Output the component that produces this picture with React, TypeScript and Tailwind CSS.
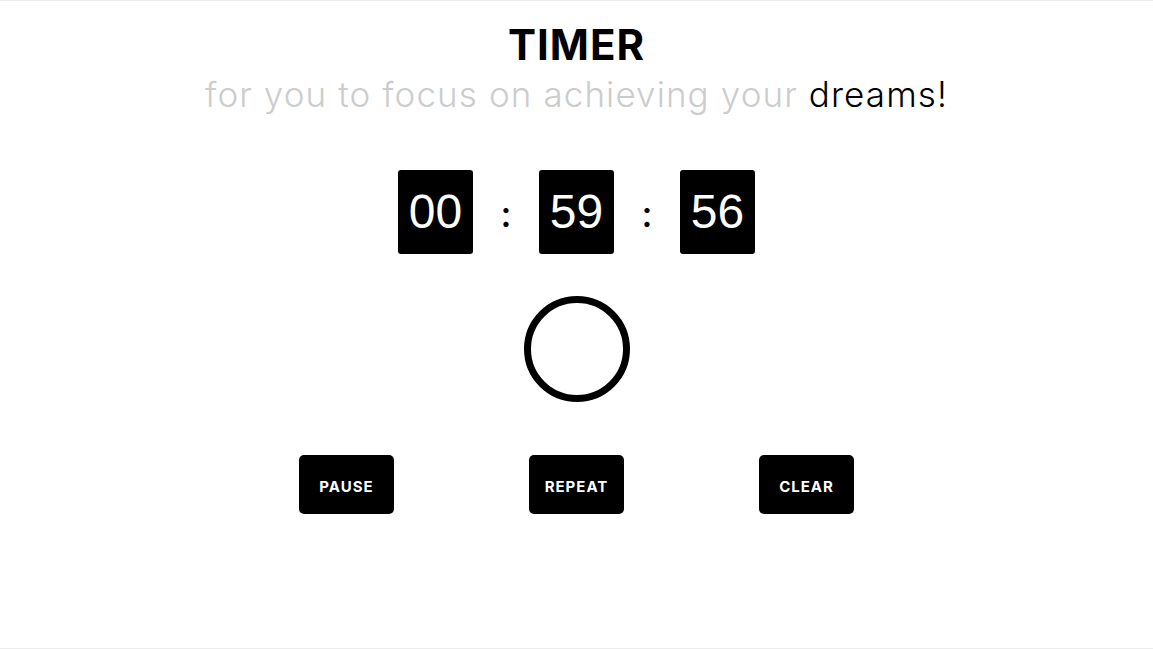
export default function App() {
  const boxes = ["00", "59", "56"];
  return (
    <div className="h-[649px] w-full border-y border-[#ececec] bg-white flex flex-col items-center" style={{ fontFamily: "Inter, 'Noto Sans', sans-serif" }}>
      <h1 className="mt-[19px] text-[42px] leading-[50px] font-bold tracking-[1px] text-black">TIMER</h1>
      <p className="mt-[2px] text-[35px] leading-[44px] font-light tracking-[1.1px] text-[#cccccc]">
        for you to focus on achieving your <span className="text-black">dreams!</span>
      </p>
      <div className="mt-[54px] flex items-center gap-[24px]">
        {boxes.map((b, i) => (
          <div key={i} className="flex items-center gap-[24px]">
            {i > 0 && <span className="text-[36px] font-medium text-black w-[18px] text-center pt-[4px]">:</span>}
            <div className="w-[75px] h-[84px] bg-black rounded-[3px] flex items-center justify-center text-white text-[48px]" style={{ fontFamily: "'Liberation Sans', Arial, sans-serif" }}>{b}</div>
          </div>
        ))}
      </div>
      <div className="mt-[42px] w-[106px] h-[106px] rounded-full border-[7px] border-black" />
      <div className="mt-[53px] flex gap-[135px]">
        {["PAUSE", "REPEAT", "CLEAR"].map((t) => (
          <button key={t} className="w-[95px] h-[59px] bg-black rounded-[5px] text-white text-[15px] font-bold tracking-[1px] pt-[5px]">{t}</button>
        ))}
      </div>
    </div>
  );
}
